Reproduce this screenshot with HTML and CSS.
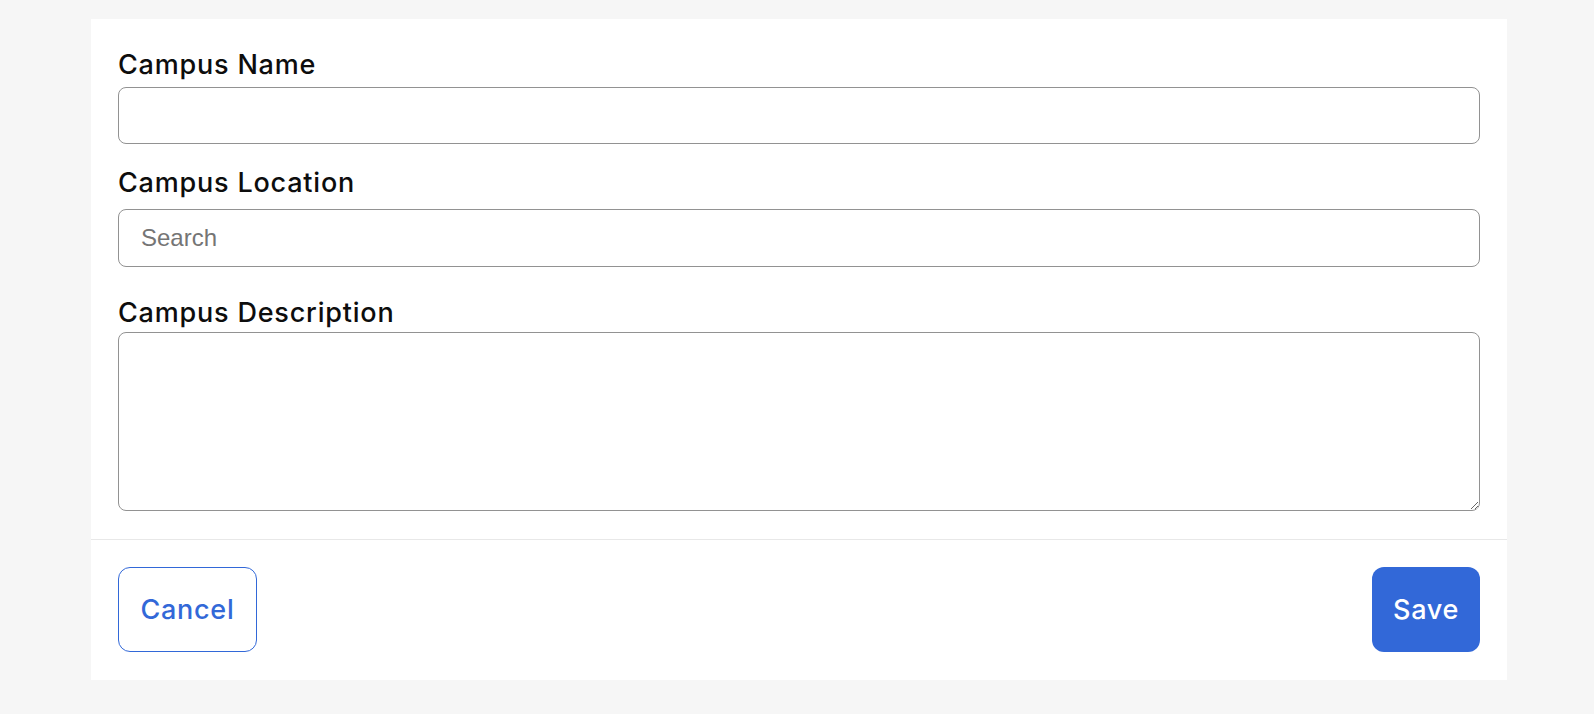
FILE: index.html
```html
<!DOCTYPE html>
<html lang="en">
<head>
<meta charset="utf-8">
<title>Campus</title>
<link rel="stylesheet" href="styles.css">
</head>
<body>
<div class="card">
  <form class="form-body">
    <div class="field field-name">
      <label class="label" for="name">Campus Name</label>
      <input class="input" id="name" type="text">
    </div>
    <div class="field field-location">
      <label class="label" for="loc">Campus Location</label>
      <input class="input input-location" id="loc" type="text" placeholder="Search">
    </div>
    <div class="field field-desc">
      <label class="label" for="desc">Campus Description</label>
      <textarea class="textarea" id="desc"></textarea>
    </div>
  </form>
  <div class="footer">
    <button class="btn btn-outline" type="button">Cancel</button>
    <button class="btn btn-primary" type="button">Save</button>
  </div>
</div>
</body>
</html>
```

FILE: styles.css
```css
html, body {
  margin: 0;
  padding: 0;
}
body {
  background: #f6f6f6;
  font-family: Inter, "Liberation Sans", sans-serif;
  color: #111;
}
.card {
  margin: 19px 0 0 91px;
  width: 1416px;
  background: #ffffff;
}
.form-body {
  display: flex;
  flex-direction: column;
  padding: 30px 27px 28px;
}
.field {
  display: flex;
  flex-direction: column;
}
.field-location {
  margin-top: 23px;
}
.field-desc {
  margin-top: 30px;
}
.label {
  font-size: 27px;
  line-height: 32px;
  font-weight: 550;
  letter-spacing: 0.8px;
  color: #0d0d0d;
}
.input, .textarea {
  box-sizing: border-box;
  width: 100%;
  border: 1px solid #929292;
  border-radius: 8px;
  background: #fff;
  font-family: "Liberation Sans", Arial, sans-serif;
  font-size: 24px;
  padding: 0 22px;
  margin: 0;
  outline: none;
  color: #111;
}
.field-name .input {
  margin-top: 6px;
  height: 57px;
}
.input-location {
  margin-top: 10px;
  height: 58px;
}
.input::placeholder {
  color: #757575;
}
.textarea {
  display: block;
  margin-top: 3px;
  height: 179px;
  padding: 14px 22px;
  resize: vertical;
}
.footer {
  display: flex;
  justify-content: space-between;
  align-items: center;
  border-top: 1px solid #e8e8e8;
  padding: 27px 27px 28px;
}
.btn {
  box-sizing: border-box;
  height: 85px;
  border-radius: 12px;
  font-family: Inter, "Liberation Sans", sans-serif;
  font-size: 27px;
  font-weight: 550;
  letter-spacing: 0.7px;
  cursor: pointer;
  margin: 0;
  padding: 0;
}
.btn-outline {
  width: 139px;
  background: #fff;
  color: #3268d8;
  border: 1px solid #3268d8;
}
.btn-primary {
  width: 108px;
  background: #3268d8;
  color: #fff;
  border: none;
}
```
